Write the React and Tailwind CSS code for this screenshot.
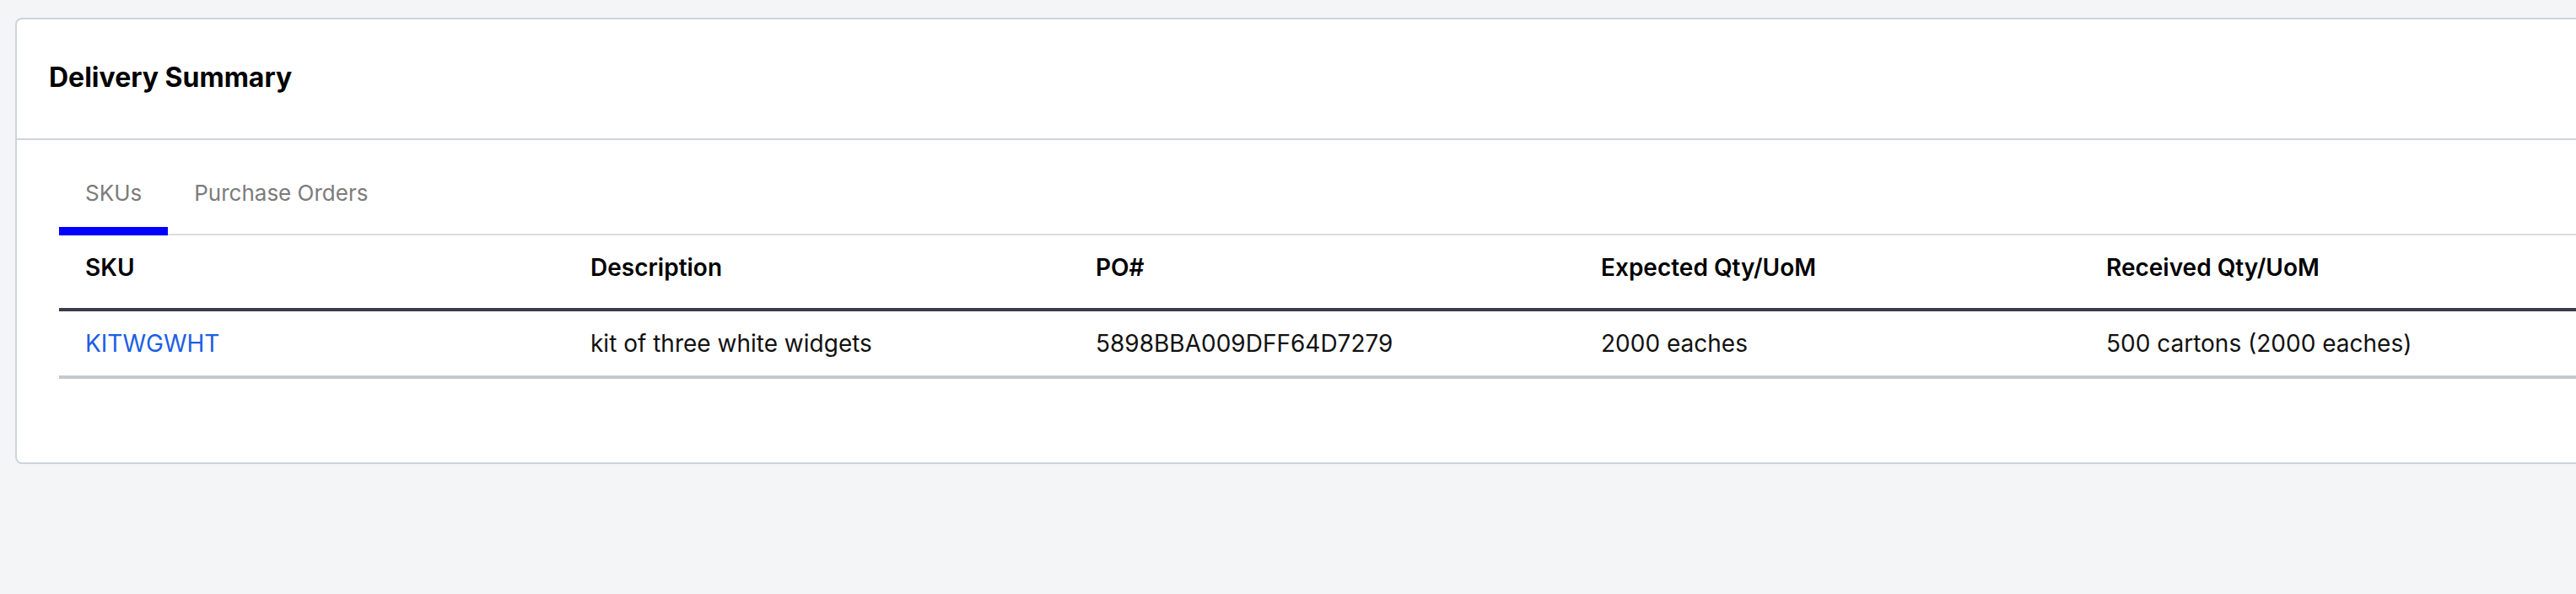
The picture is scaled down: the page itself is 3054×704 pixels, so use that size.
import React, { useState } from 'react';

const rows = [
    {
        sku: 'KITWGWHT',
        description: 'kit of three white widgets',
        po: '5898BBA009DFF64D7279',
        expected: '2000 eaches',
        received: '500 cartons (2000 eaches)'
    }
];

const columns = ['SKU', 'Description', 'PO#', 'Expected Qty/UoM', 'Received Qty/UoM'];

const App = () => {
    const [tab, setTab] = useState('skus');

    return (
        <div className="w-[3054px] h-[704px] overflow-hidden bg-[#f4f5f7] pt-[21px] pl-[18px] font-['Inter',sans-serif]">
            <div className="w-[3200px] bg-white border-2 border-[#cdd4df] rounded-[8px]">
                <div className="h-[143px] flex items-center pl-[38px] pb-[3px] border-b-2 border-[#cdd4df]">
                    <h2 className="text-[32px] leading-[40px] font-bold text-black">Delivery Summary</h2>
                </div>

                <div className="pt-[35px] pl-[50px] pb-[99px]">
                    <div className="flex border-b-2 border-[#dcdde0]">
                        <button
                            onClick={() => setTab('skus')}
                            className={`-mb-[2px] px-[31px] pt-[8px] pb-[20px] text-[26px] leading-[40px] text-[#7b7b7b] border-b-[10px] ${tab === 'skus' ? 'border-[#0000ff]' : 'border-transparent'}`}>
                            SKUs
                        </button>
                        <button
                            onClick={() => setTab('pos')}
                            className={`-mb-[2px] px-[31px] pt-[8px] pb-[20px] text-[26px] leading-[40px] text-[#7b7b7b] border-b-[10px] ${tab === 'pos' ? 'border-[#0000ff]' : 'border-transparent'}`}>
                            Purchase Orders
                        </button>
                    </div>

                    <table className="table-fixed border-separate border-spacing-0 w-[2995px] text-[28px] leading-[40px]">
                        <thead>
                            <tr>
                                {columns.map(col => (
                                    <th key={col} className="w-[599px] pl-[31px] pt-[18px] pb-[28px] text-left font-semibold text-black border-b-4 border-[#393c48]">
                                        {col}
                                    </th>
                                ))}
                            </tr>
                        </thead>
                        <tbody>
                            {rows.map(row => (
                                <tr key={row.sku}>
                                    <td className="pl-[31px] py-[18px] border-b-4 border-[#c4c8d0]">
                                        <a href="#" className="text-[#1a5ee6]">{row.sku}</a>
                                    </td>
                                    <td className="pl-[31px] py-[18px] text-[#111] border-b-4 border-[#c4c8d0]">{row.description}</td>
                                    <td className="pl-[31px] py-[18px] text-[#111] border-b-4 border-[#c4c8d0]">{row.po}</td>
                                    <td className="pl-[31px] py-[18px] text-[#111] border-b-4 border-[#c4c8d0]">{row.expected}</td>
                                    <td className="pl-[31px] py-[18px] text-[#111] border-b-4 border-[#c4c8d0]">{row.received}</td>
                                </tr>
                            ))}
                        </tbody>
                    </table>
                </div>
            </div>
        </div>
    );
};

export default App;
